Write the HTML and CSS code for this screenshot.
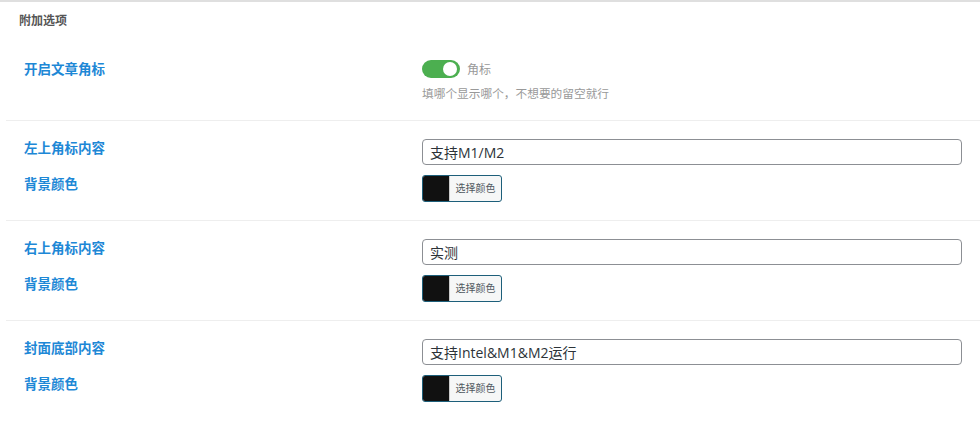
FILE: index.html
```html
<!DOCTYPE html>
<html lang="zh-CN">
<head>
    <meta charset="UTF-8">
    <title>附加选项</title>
    <link rel="stylesheet" href="styles.css">
</head>
<body>
    <div class="section">
        <div class="section-title">附加选项</div>

        <div class="group group-switch">
            <div class="field">
                <div class="label">开启文章角标</div>
                <div class="control">
                    <div class="switch-row">
                        <span class="switch on"><span class="knob"></span></span>
                        <span class="switch-text">角标</span>
                    </div>
                    <div class="help">填哪个显示哪个，不想要的留空就行</div>
                </div>
            </div>
        </div>

        <div class="group">
            <div class="field">
                <div class="label">左上角标内容</div>
                <div class="control"><input class="text" type="text" value="支持M1/M2"></div>
            </div>
            <div class="field">
                <div class="label">背景颜色</div>
                <div class="control">
                    <button class="color-btn"><span class="swatch"></span><span class="color-text">选择颜色</span></button>
                </div>
            </div>
        </div>

        <div class="group">
            <div class="field">
                <div class="label">右上角标内容</div>
                <div class="control"><input class="text" type="text" value="实测"></div>
            </div>
            <div class="field">
                <div class="label">背景颜色</div>
                <div class="control">
                    <button class="color-btn"><span class="swatch"></span><span class="color-text">选择颜色</span></button>
                </div>
            </div>
        </div>

        <div class="group">
            <div class="field">
                <div class="label">封面底部内容</div>
                <div class="control"><input class="text" type="text" value="支持Intel&amp;M1&amp;M2运行"></div>
            </div>
            <div class="field">
                <div class="label">背景颜色</div>
                <div class="control">
                    <button class="color-btn"><span class="swatch"></span><span class="color-text">选择颜色</span></button>
                </div>
            </div>
        </div>
    </div>
</body>
</html>
```

FILE: styles.css
```css
* {
    margin: 0;
    padding: 0;
    box-sizing: border-box;
}

body {
    background: #fff;
    font-family: "Noto Sans", "Noto Sans CJK SC", sans-serif;
    color: #333;
}

.section {
    border-top: 2px solid #dfdfdf;
}

.section-title {
    height: 40px;
    padding: 11px 0 0 19px;
    font-size: 12px;
    font-weight: bold;
    color: #555;
    line-height: 16px;
}

.group {
    margin-left: 6px;
    padding: 18px;
    display: flex;
    flex-direction: column;
    gap: 10px;
}

.group-switch {
    padding-bottom: 19px;
}

.group + .group {
    border-top: 1px solid #eee;
}

.field {
    display: flex;
}

.label {
    width: 398px;
    flex-shrink: 0;
    font-size: 13.5px;
    font-weight: bold;
    color: #1e88d6;
    line-height: 18px;
}

.control {
    flex: 1;
}

.switch-row {
    display: flex;
    align-items: center;
    height: 18px;
}

.switch {
    width: 38px;
    height: 18px;
    border-radius: 9px;
    background: #4caf50;
    position: relative;
}

.switch .knob {
    position: absolute;
    top: 2px;
    right: 3px;
    width: 14px;
    height: 14px;
    border-radius: 50%;
    background: #fff;
}

.switch-text {
    margin-left: 7px;
    font-size: 12px;
    color: #999;
}

.help {
    margin-top: 7px;
    font-size: 11.7px;
    color: #999;
    line-height: 16px;
}

.text {
    display: block;
    width: 100%;
    height: 26px;
    border: 1px solid #8c8f94;
    border-radius: 4px;
    padding: 0 7px;
    font-family: "Open Sans", "Noto Sans CJK SC", sans-serif;
    font-size: 14px;
    color: #2c3338;
    background: #fff;
}

.color-btn {
    display: flex;
    align-items: stretch;
    width: 80px;
    height: 27px;
    border: 1px solid #1d5f7a;
    border-radius: 3px;
    background: #f6f7f7;
    overflow: hidden;
    cursor: pointer;
    font-family: "Noto Sans", "Noto Sans CJK SC", sans-serif;
}

.swatch {
    width: 27px;
    background: #111;
    border-right: 1px solid #ccc;
}

.color-text {
    flex: 1;
    font-size: 10px;
    color: #50575e;
    line-height: 25px;
    text-align: center;
}
```
